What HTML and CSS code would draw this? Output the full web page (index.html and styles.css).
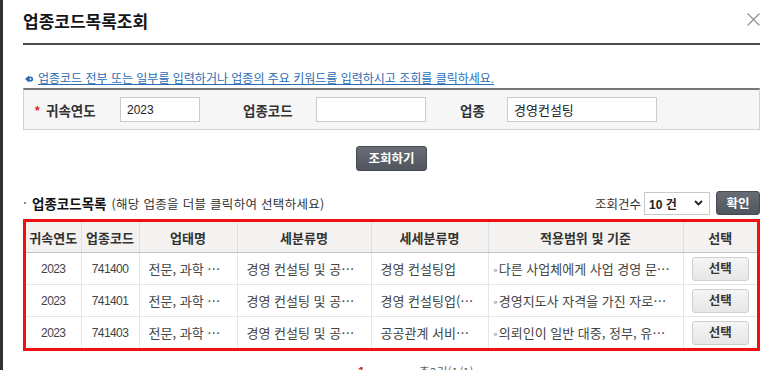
FILE: index.html
```html
<!DOCTYPE html>
<html lang="ko">
<head>
<meta charset="utf-8">
<title>업종코드목록조회</title>
<link rel="stylesheet" href="styles.css">
</head>
<body>
<div class="frame">
  <div class="dialog">
    <div class="dlg-head">
      <h1 class="dlg-title">업종코드목록조회</h1>
      <button class="dlg-close" type="button" aria-label="닫기">
        <svg width="13" height="13" viewBox="0 0 13 13"><path d="M0.5 0.5 L12.5 12.5 M12.5 0.5 L0.5 12.5" stroke="#8a8e98" stroke-width="1.1" fill="none"/></svg>
      </button>
    </div>

    <p class="notice">
      <svg class="notice-icon" width="9" height="8" viewBox="0 0 9 8"><path d="M0 4 L4 0.5 L4 7.5 Z" fill="#2a6cb4"/><circle cx="5.5" cy="4" r="2.6" fill="#2a6cb4"/><circle cx="5.5" cy="4" r="0.9" fill="#fff"/></svg><span class="notice-text">업종코드 전부 또는 일부를 입력하거나 업종의 주요 키워드를 입력하시고 조회를 클릭하세요.</span>
    </p>

    <div class="search-box">
      <div class="field field-year">
        <span class="req">*</span>
        <label class="field-label lbl-year">귀속연도</label>
        <input class="field-input in-year" type="text" value="2023">
      </div>
      <div class="field field-code">
        <label class="field-label lbl-code">업종코드</label>
        <input class="field-input in-code" type="text" value="">
      </div>
      <div class="field field-name">
        <label class="field-label lbl-name">업종</label>
        <input class="field-input in-name" type="text" value="경영컨설팅">
      </div>
    </div>

    <div class="btn-row">
      <button class="btn-dark btn-search" type="button">조회하기</button>
    </div>

    <div class="list-head">
      <div class="list-title"><span class="dot"></span><strong class="list-name">업종코드목록</strong><span class="hint">(해당 업종을 더블 클릭하여 선택하세요)</span></div>
      <div class="list-ctrl">
        <span class="cnt-label">조회건수</span>
        <div class="select"><span class="select-val">10 건</span><svg width="9" height="6" viewBox="0 0 9 6"><path d="M1 1 L4.5 4.5 L8 1" stroke="#222" stroke-width="1.8" fill="none"/></svg></div>
        <button class="btn-dark btn-ok" type="button">확인</button>
      </div>
    </div>

    <div class="grid-wrap">
      <table class="grid">
        <colgroup>
          <col class="c1"><col class="c2"><col class="c3"><col class="c4"><col class="c5"><col class="c6"><col class="c7">
        </colgroup>
        <thead>
          <tr><th>귀속연도</th><th>업종코드</th><th>업태명</th><th>세분류명</th><th>세세분류명</th><th>적용범위 및 기준</th><th>선택</th></tr>
        </thead>
        <tbody>
          <tr>
            <td class="num">2023</td><td class="num">741400</td>
            <td class="txt">전문, 과학 및 기술 서비스업</td>
            <td class="txt">경영 컨설팅 및 공공관계 서비스업</td>
            <td class="txt">경영 컨설팅업</td>
            <td class="txt wide"><span class="mark">◦</span>다른 사업체에게 사업 경영 문제에 관한 자문 및 지원을 제공하는 경우</td>
            <td class="sel"><button class="btn-pick" type="button">선택</button></td>
          </tr>
          <tr>
            <td class="num">2023</td><td class="num">741401</td>
            <td class="txt">전문, 과학 및 기술 서비스업</td>
            <td class="txt">경영 컨설팅 및 공공관계 서비스업</td>
            <td class="txt">경영 컨설팅업(경영지도사)</td>
            <td class="txt wide"><span class="mark">◦</span>경영지도사 자격을 가진 자로서 경영 자문 서비스를 제공하는 경우</td>
            <td class="sel"><button class="btn-pick" type="button">선택</button></td>
          </tr>
          <tr>
            <td class="num">2023</td><td class="num">741403</td>
            <td class="txt">전문, 과학 및 기술 서비스업</td>
            <td class="txt">경영 컨설팅 및 공공관계 서비스업</td>
            <td class="txt">공공관계 서비스업</td>
            <td class="txt wide"><span class="mark">◦</span>의뢰인이 일반 대중, 정부, 유권자 등에게 좋은 인상을 주도록 하는 경우</td>
            <td class="sel"><button class="btn-pick" type="button">선택</button></td>
          </tr>
        </tbody>
      </table>
    </div>

    <div class="paging"><span class="pg-cur">1</span><span class="pg-total">총3건(1/1)</span></div>
  </div>
</div>
</body>
</html>
```

FILE: styles.css
```css
html, body {
  margin: 0;
  padding: 0;
  height: 100%;
  overflow: hidden;
  background: #fff;
}

body {
  font-family: "Liberation Sans", "Noto Sans CJK KR", sans-serif;
  color: #333;
  font-size: 12px;
}

.frame {
  display: flex;
  height: 370px;
  border-left: 3px solid #2f3237;
}

.dialog {
  flex: 1;
  padding: 0 13px 0 20px;
  min-width: 0;
}

/* header */
.dlg-head {
  display: flex;
  justify-content: space-between;
  align-items: flex-start;
  padding: 9px 0 10px;
  border-bottom: 2px solid #4a4a4a;
}

.dlg-title {
  margin: 0;
  font-family: "Noto Sans CJK KR", sans-serif;
  font-size: 17px;
  line-height: 24px;
  font-weight: 700;
  color: #161616;
}

.dlg-close {
  margin: 4px 0 0;
  padding: 0;
  border: 0;
  background: none;
  width: 13px;
  height: 13px;
  display: block;
}

.dlg-close svg { display: block; }

/* notice */
.notice {
  margin: 26px 0 1px;
  padding-left: 2px;
  display: flex;
  align-items: center;
  line-height: 16px;
  font-size: 12px;
  color: #2a6cb4;
}

.notice-icon {
  margin-right: 4px;
  flex: none;
}

.notice-text {
  text-decoration: underline;
  white-space: nowrap;
}

/* search box */
.search-box {
  display: flex;
  align-items: center;
  background: #f6f6f6;
  border: 1px solid #d2d2d2;
  border-top: 2px solid #777;
  padding: 7px 0 7px 11px;
}

.field {
  display: flex;
  align-items: center;
}

.req {
  width: 11px;
  color: #e02020;
  font-weight: 700;
  font-size: 12px;
  line-height: 12px;
  padding-top: 3px;
}

.field-label {
  font-family: "Noto Sans CJK KR", sans-serif;
  font-weight: 700;
  font-size: 13.5px;
  line-height: 18px;
  color: #333;
}

.lbl-year { width: 74px; }
.field-code { margin-left: 43px; }
.lbl-code { width: 73px; }
.field-name { margin-left: 34px; }
.lbl-name { width: 47px; }

.field-input {
  box-sizing: border-box;
  height: 25px;
  border: 1px solid #cbcbcb;
  background: #fff;
  padding: 0 6px;
  margin: 0;
  font-family: "Liberation Sans", "Noto Sans CJK KR", sans-serif;
  font-size: 12px;
  color: #222;
  outline: none;
}

.in-year { width: 80px; }
.in-code { width: 110px; }
.in-name { width: 150px; font-size: 13px; }

/* buttons */
.btn-row {
  display: flex;
  justify-content: center;
  margin-top: 16px;
}

.btn-dark {
  box-sizing: border-box;
  border: 1px solid #464a51;
  border-radius: 3px;
  background: linear-gradient(#676c75, #51565e);
  color: #fff;
  font-family: "Noto Sans CJK KR", sans-serif;
  font-weight: 700;
  font-size: 12.5px;
  line-height: 1;
  padding: 0;
  margin: 0;
}

.btn-search {
  width: 71px;
  height: 25px;
}

/* list head */
.list-head {
  display: flex;
  justify-content: space-between;
  align-items: center;
  height: 24px;
  margin-top: 20px;
}

.list-title {
  display: flex;
  align-items: center;
  padding-left: 1px;
  font-family: "Noto Sans CJK KR", sans-serif;
}

.dot {
  width: 2px;
  height: 2px;
  background: #888;
  margin-right: 6px;
}

.list-name {
  font-size: 13.5px;
  font-weight: 700;
  color: #111;
  margin-right: 5px;
}

.hint {
  font-size: 12.5px;
  letter-spacing: 0.3px;
  color: #333;
}

.list-ctrl {
  display: flex;
  align-items: center;
}

.cnt-label {
  font-family: "Noto Sans CJK KR", sans-serif;
  font-size: 12.5px;
  color: #333;
  margin-right: 3px;
}

.select {
  box-sizing: border-box;
  width: 66px;
  height: 23px;
  border: 1px solid #c8c8c8;
  background: #fff;
  display: flex;
  align-items: center;
  justify-content: space-between;
  padding: 0 6px 0 4px;
  margin-right: 6px;
}

.select-val {
  font-size: 12px;
  font-weight: 700;
  color: #222;
}

.select svg { display: block; }

.btn-ok {
  width: 44px;
  height: 24px;
}

/* grid */
.grid-wrap {
  margin-top: 4px;
  border: 3px solid #f01010;
}

.grid {
  width: 100%;
  table-layout: fixed;
  border-collapse: collapse;
}

.c1 { width: 55px; }
.c2 { width: 58px; }
.c3 { width: 98px; }
.c4 { width: 134px; }
.c5 { width: 117px; }
.c6 { width: 195px; }
.c7 { width: 74px; }

.grid th {
  height: 30px;
  padding: 0;
  background: #f3f2f0;
  border-bottom: 1px solid #c4c4c4;
  border-right: 1px solid #e0e0e0;
  font-family: "Noto Sans CJK KR", sans-serif;
  font-size: 13px;
  font-weight: 700;
  color: #333;
  text-align: center;
  white-space: nowrap;
}

.grid td {
  height: 31px;
  padding: 0;
  border-bottom: 1px solid #e6e6e6;
  border-right: 1px solid #e6e6e6;
  color: #444;
  white-space: nowrap;
}

.grid tr > :last-child { border-right: 0; }
.grid tbody tr:last-child td { border-bottom: 0; }

.grid td.num {
  text-align: center;
  font-size: 12px;
  letter-spacing: -0.6px;
}

.grid td.txt {
  padding: 0 9px;
  font-family: "Noto Sans CJK KR", sans-serif;
  font-size: 13px;
  overflow: hidden;
  text-overflow: ellipsis;
}

.grid td.txt.wide {
  padding: 0 12px 0 8px;
}

.grid td.txt .mark {
  font-family: "Liberation Sans", "DejaVu Sans", sans-serif;
  font-size: 12px;
  margin-left: -3px;
  margin-right: 1px;
}

.grid td.sel {
  text-align: center;
}

.btn-pick {
  box-sizing: border-box;
  width: 57px;
  height: 24px;
  margin: 0;
  padding: 0;
  border: 1px solid #cfcfcf;
  border-radius: 3px;
  background: linear-gradient(#f5f5f5, #e7e7e7);
  font-family: "Noto Sans CJK KR", sans-serif;
  font-size: 12.5px;
  font-weight: 700;
  color: #333;
  line-height: 1;
}

/* paging */
.paging {
  display: flex;
  margin-top: 13px;
  padding-left: 335px;
  line-height: 16px;
}

.pg-cur {
  color: #e02020;
  font-weight: 700;
  font-size: 12px;
}

.pg-total {
  margin-left: 54px;
  color: #666;
  font-family: "Noto Sans CJK KR", sans-serif;
  font-size: 12px;
}
```
